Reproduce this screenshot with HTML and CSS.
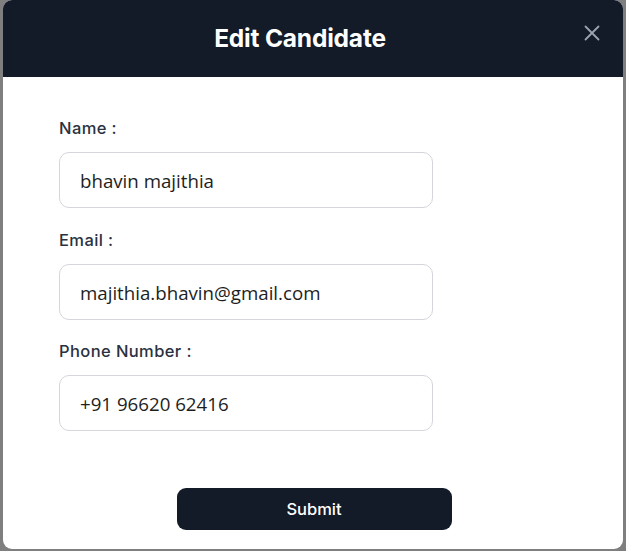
FILE: index.html
```html
<!DOCTYPE html>
<html>
<head>
<meta charset="utf-8">
<link rel="stylesheet" href="styles.css">
</head>
<body>
<div class="modal">
  <div class="modal-header">
    <h2 class="modal-title">Edit Candidate</h2>
    <button class="close-btn" aria-label="Close">
      <svg width="16" height="16" viewBox="0 0 16 16"><path d="M1.5 1.5 L14.5 14.5 M14.5 1.5 L1.5 14.5" stroke="#9ca3af" stroke-width="1.8" stroke-linecap="round" fill="none"/></svg>
    </button>
  </div>
  <form class="modal-body">
    <div class="field">
      <label class="field-label">Name :</label>
      <div class="field-input">bhavin majithia</div>
    </div>
    <div class="field">
      <label class="field-label">Email :</label>
      <div class="field-input">majithia.bhavin@gmail.com</div>
    </div>
    <div class="field">
      <label class="field-label">Phone Number :</label>
      <div class="field-input">+91 96620 62416</div>
    </div>
    <div class="actions">
      <button type="button" class="submit-btn">Submit</button>
    </div>
  </form>
</div>
</body>
</html>
```
FILE: styles.css
```css
html, body {
  margin: 0;
  padding: 0;
}
body {
  background: #7f7f7f;
  width: 626px;
  height: 551px;
  overflow: hidden;
  font-family: Inter, "Noto Sans", sans-serif;
}
.modal {
  margin-left: 3px;
  width: 620px;
  height: 549px;
  background: #ffffff;
  border-radius: 9px;
  overflow: hidden;
  display: flex;
  flex-direction: column;
}
.modal-header {
  background: #131a28;
  height: 77px;
  display: flex;
  align-items: center;
  justify-content: center;
  position: relative;
  padding-right: 26px;
  padding-bottom: 2px;
  box-sizing: border-box;
}
.modal-title {
  margin: 0;
  color: #ffffff;
  font-size: 24.5px;
  font-weight: 700;
  letter-spacing: -0.2px;
}
.close-btn {
  position: absolute;
  right: 23px;
  top: 25px;
  width: 16px;
  height: 16px;
  padding: 0;
  border: 0;
  background: none;
  display: flex;
}
.modal-body {
  padding: 40px 0 0 56px;
  display: flex;
  flex-direction: column;
  flex: 1;
}
.field {
  display: flex;
  flex-direction: column;
  gap: 13px;
  margin-bottom: 21px;
}
.field:nth-child(3) {
  margin-bottom: 0;
}
.field:nth-child(3) .field-label {
  margin-top: -1px;
}
.field-label {
  font-size: 16.5px;
  line-height: 22px;
  font-weight: 500;
  letter-spacing: 0.4px;
  color: #2a3140;
}
.field-input {
  box-sizing: border-box;
  width: 374px;
  height: 56px;
  border: 1px solid #d4d6db;
  border-radius: 10px;
  padding: 0 20px;
  display: flex;
  align-items: center;
  font-family: "Open Sans", "Noto Sans", sans-serif;
  font-size: 18.7px;
  color: #1e1e1e;
}
.actions {
  display: flex;
  justify-content: center;
  padding-right: 56px;
  margin-top: 57px;
}
.submit-btn {
  width: 275px;
  height: 42px;
  background: #131a28;
  color: #ffffff;
  border: 0;
  border-radius: 9px;
  font-family: Inter, "Noto Sans", sans-serif;
  font-size: 16.5px;
  font-weight: 500;
  margin-left: 2px;
}
```
